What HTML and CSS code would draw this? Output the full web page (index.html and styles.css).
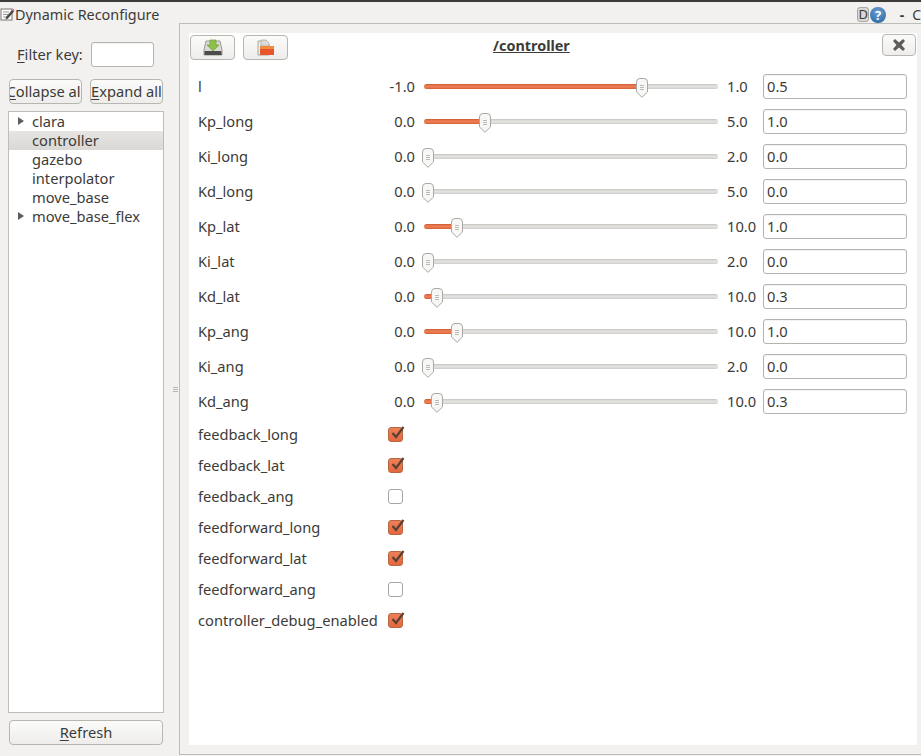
FILE: index.html
```html
<!DOCTYPE html>
<html lang="en">
<head>
<meta charset="utf-8">
<title>Dynamic Reconfigure</title>
<link rel="stylesheet" href="styles.css">
</head>
<body>
<div class="app">
  <header class="titlebar">
    <svg class="app-icon" width="15" height="15" viewBox="0 0 15 15"><rect x="1" y="2" width="11" height="11" fill="#fff" stroke="#77756f"/><path d="M3 5h6M3 7.500h5M3 10h5" stroke="#9a9892"/><path d="M6 10l6-7 2 1.500-6 7-2.500 1z" fill="#4a4945"/><path d="M12 3l1-1.500 1.500 1.500-.5 1.500z" fill="#d26fb0"/></svg>
    <span class="title-text">Dynamic Reconfigure</span>
    <span class="title-tools">
      <span class="d-btn">D</span>
      <span class="help">?</span>
      <span class="dash">-</span>
      <span class="c-btn">C</span>
    </span>
  </header>
  <div class="main">
    <aside class="side">
      <div class="filter">
        <label class="filter-label"><u>F</u>ilter key:</label>
        <span class="field filter-input"></span>
      </div>
      <div class="btn-row">
        <button class="btn"><span><u>C</u>ollapse all</span></button>
        <button class="btn"><span><u>E</u>xpand all</span></button>
      </div>
      <ul class="tree">
        <li class="node"><i class="arrow"></i>clara</li>
        <li class="node selected">controller</li>
        <li class="node">gazebo</li>
        <li class="node">interpolator</li>
        <li class="node">move_base</li>
        <li class="node"><i class="arrow"></i>move_base_flex</li>
      </ul>
      <button class="btn refresh"><span><u>R</u>efresh</span></button>
    </aside>
    <div class="splitter"><i></i><i></i><i></i></div>
    <section class="frame">
      <div class="panel">
        <div class="toolbar">
          <button class="btn tool">
            <svg width="20" height="18" viewBox="0 0 20 18"><path d="M3 2h14l2 9v5H1v-5z" fill="#d9d9d5" stroke="#9b9a96"/><rect x="1.500" y="12" width="17" height="4" fill="#4b4b48"/><path d="M7 1h6v5h3l-6 6-6-6h3z" fill="#8fc14a" stroke="#6f9d34" stroke-width=".7"/></svg>
          </button>
          <button class="btn tool">
            <svg width="18" height="18" viewBox="0 0 18 18"><path d="M1 2h8l3 3v11H1z" fill="#eeeeea" stroke="#a8a7a2"/><path d="M4 1h5l3 3v3H4z" fill="#dcdbd6" stroke="#a8a7a2" stroke-width=".7"/><rect x="3" y="7" width="14" height="9" fill="#e8552a"/><rect x="3" y="7" width="14" height="3" fill="#f08a3c"/></svg>
          </button>
          <h1 class="heading">/controller</h1>
          <button class="btn close">
            <svg width="14" height="14" viewBox="0 0 14 14"><path d="M1 3l2-2 4 3.500L11 1l2 2-3.500 4L13 11l-2 2-4-3.500L3 13l-2-2 3.500-4z" fill="#5d5c58"/></svg>
          </button>
        </div>
        <div class="params">
          <div class="row"><span class="name">l</span><span class="min">-1.0</span><span class="slider" style="--p:.75"><b class="thumb"></b></span><span class="max">1.0</span><span class="field val">0.5</span></div>
          <div class="row"><span class="name">Kp_long</span><span class="min">0.0</span><span class="slider" style="--p:.2"><b class="thumb"></b></span><span class="max">5.0</span><span class="field val">1.0</span></div>
          <div class="row"><span class="name">Ki_long</span><span class="min">0.0</span><span class="slider" style="--p:0"><b class="thumb"></b></span><span class="max">2.0</span><span class="field val">0.0</span></div>
          <div class="row"><span class="name">Kd_long</span><span class="min">0.0</span><span class="slider" style="--p:0"><b class="thumb"></b></span><span class="max">5.0</span><span class="field val">0.0</span></div>
          <div class="row"><span class="name">Kp_lat</span><span class="min">0.0</span><span class="slider" style="--p:.1"><b class="thumb"></b></span><span class="max">10.0</span><span class="field val">1.0</span></div>
          <div class="row"><span class="name">Ki_lat</span><span class="min">0.0</span><span class="slider" style="--p:0"><b class="thumb"></b></span><span class="max">2.0</span><span class="field val">0.0</span></div>
          <div class="row"><span class="name">Kd_lat</span><span class="min">0.0</span><span class="slider" style="--p:.03"><b class="thumb"></b></span><span class="max">10.0</span><span class="field val">0.3</span></div>
          <div class="row"><span class="name">Kp_ang</span><span class="min">0.0</span><span class="slider" style="--p:.1"><b class="thumb"></b></span><span class="max">10.0</span><span class="field val">1.0</span></div>
          <div class="row"><span class="name">Ki_ang</span><span class="min">0.0</span><span class="slider" style="--p:0"><b class="thumb"></b></span><span class="max">2.0</span><span class="field val">0.0</span></div>
          <div class="row"><span class="name">Kd_ang</span><span class="min">0.0</span><span class="slider" style="--p:.03"><b class="thumb"></b></span><span class="max">10.0</span><span class="field val">0.3</span></div>
        </div>
        <div class="checks">
          <div class="check"><span class="name">feedback_long</span><span class="box on"><svg width="17" height="17" viewBox="0 0 17 17"><path d="M3.500 8l3.500 4 7.500-10" fill="none" stroke="#5a4034" stroke-width="2.200"/></svg></span></div>
          <div class="check"><span class="name">feedback_lat</span><span class="box on"><svg width="17" height="17" viewBox="0 0 17 17"><path d="M3.500 8l3.500 4 7.500-10" fill="none" stroke="#5a4034" stroke-width="2.200"/></svg></span></div>
          <div class="check"><span class="name">feedback_ang</span><span class="box"></span></div>
          <div class="check"><span class="name">feedforward_long</span><span class="box on"><svg width="17" height="17" viewBox="0 0 17 17"><path d="M3.500 8l3.500 4 7.500-10" fill="none" stroke="#5a4034" stroke-width="2.200"/></svg></span></div>
          <div class="check"><span class="name">feedforward_lat</span><span class="box on"><svg width="17" height="17" viewBox="0 0 17 17"><path d="M3.500 8l3.500 4 7.500-10" fill="none" stroke="#5a4034" stroke-width="2.200"/></svg></span></div>
          <div class="check"><span class="name">feedforward_ang</span><span class="box"></span></div>
          <div class="check"><span class="name">controller_debug_enabled</span><span class="box on"><svg width="17" height="17" viewBox="0 0 17 17"><path d="M3.500 8l3.500 4 7.500-10" fill="none" stroke="#5a4034" stroke-width="2.200"/></svg></span></div>
        </div>
      </div>
    </section>
  </div>
</div>
</body>
</html>
```

FILE: styles.css
```css
* { box-sizing: border-box; }
html, body { margin: 0; height: 100%; }
body {
  background: #f2f1f0;
  color: #3c3b37;
  font: 14.67px/19px "Noto Sans", sans-serif;
  overflow: hidden;
}
.app {
  width: 921px;
  height: 756px;
  display: flex;
  flex-direction: column;
  border-top: 2px solid #3c3b37;
  overflow: hidden;
}
.titlebar {
  height: 21px;
  padding-top: 4px;
  display: flex;
  align-items: center;
  flex: none;
  position: relative;
}
.app-icon { flex: none; }
.title-text { font-size: 14.4px; }
.title-tools {
  margin-left: auto;
  display: flex;
  align-items: center;
  width: 64px;
  white-space: nowrap;
  font-size: 14px;
}
.d-btn {
  width: 13px;
  height: 15px;
  background: #d8d7d3;
  border: 1px solid #a9a8a3;
  border-radius: 3px;
  font-size: 13px;
  line-height: 13px;
  text-align: center;
}
.help {
  width: 16px;
  height: 16px;
  margin-left: 1px;
  border-radius: 50%;
  background: radial-gradient(circle at 50% 30%, #6a9fd0, #25649f);
  color: #fff;
  font-size: 13px;
  font-weight: 700;
  line-height: 16px;
  text-align: center;
}
.dash { margin-left: 14px; font-weight: 700; }
.c-btn { margin-left: 8px; }
.main { flex: 1; display: flex; min-height: 0; }
.side {
  width: 172px;
  flex: none;
  padding: 0 8px 11px 8px;
  display: flex;
  flex-direction: column;
}
.filter {
  height: 25px;
  margin-top: 19px;
  display: flex;
  align-items: center;
  padding-left: 9px;
}
.filter-label { width: 74px; }
.field {
  background: #fff;
  border: 1px solid #b5b3ae;
  border-radius: 3px;
  box-shadow: inset 0 1px 1px rgba(0,0,0,.05);
}
.filter-input { width: 63px; height: 25px; }
.btn-row {
  display: flex;
  gap: 8px;
  margin: 12px 0 7px 1px;
}
.btn {
  height: 25px;
  padding: 0;
  font: inherit;
  color: inherit;
  background: linear-gradient(#fbfbfa, #eeedeb);
  border: 1px solid #b8b6b1;
  border-radius: 4px;
  display: flex;
  align-items: center;
  justify-content: center;
  overflow: hidden;
  white-space: nowrap;
}
.btn-row .btn { width: 73px; }
.tree {
  list-style: none;
  flex: 1;
  margin: 0;
  padding: 0;
  width: 156px;
  background: #fff;
  border: 1px solid #bfbdb8;
}
.node {
  height: 19px;
  padding-left: 23px;
  line-height: 18px;
  position: relative;
}
.selected { background: linear-gradient(#e6e5e3, #d9d8d5); }
.arrow {
  position: absolute;
  left: 9px;
  top: 5px;
  border-left: 6px solid #5f5e5a;
  border-top: 4px solid transparent;
  border-bottom: 4px solid transparent;
}
.refresh { width: 154px; margin: 7px 0 0 1px; flex: none; }
.splitter {
  width: 7px;
  flex: none;
  display: flex;
  flex-direction: column;
  align-items: center;
  justify-content: center;
  gap: 1px;
}
.splitter i { width: 5px; height: 1px; background: #b9b7b2; }
.frame {
  flex: 1;
  margin-bottom: 1px;
  border: 1px solid #bfbdb8;
  border-right: 0;
  padding: 9px 4px 9px 9px;
  display: flex;
}
.panel {
  flex: 1;
  background: #fff;
  display: flex;
  flex-direction: column;
}
.toolbar {
  height: 27px;
  display: flex;
  align-items: flex-start;
  padding: 2px 1px 0 1px;
  position: relative;
  flex: none;
}
.tool { width: 45px; height: 25px; margin-right: 8px; }
.heading {
  flex: 1;
  margin: 0;
  padding: 1px 0 0 197px;
  font-size: 14.4px;
  line-height: 20px;
  font-weight: 700;
  text-decoration: underline;
  white-space: nowrap;
}
.close { width: 34px; height: 22px; margin-top: -1px; flex: none; }
.params {
  display: flex;
  flex-direction: column;
  gap: 10px;
  padding-top: 14px;
}
.row {
  height: 25px;
  display: grid;
  grid-template-columns: 190px 36px 303px 45px 144px;
  align-items: center;
}
.name { padding-left: 9px; white-space: nowrap; }
.min { text-align: right; }
.slider {
  height: 5px;
  margin-left: 9px;
  position: relative;
  width: 294px;
  border-radius: 3px;
  background:
    linear-gradient(rgba(0,0,0,.12), rgba(255,255,255,.14) 40%, rgba(255,255,255,.14) 60%, rgba(0,0,0,.08)),
    linear-gradient(90deg, #e9683a 0, #e9683a calc(4px + var(--p) * 285px), #dedddA calc(4px + var(--p) * 285px));
}
.thumb {
  position: absolute;
  left: calc(4px + var(--p) * 285px - 6px);
  top: -6px;
  width: 12px;
  height: 20px;
  background: url("data:image/svg+xml,%3Csvg xmlns='http://www.w3.org/2000/svg' width='12' height='20'%3E%3Cpath d='M.5 4a3.500 3.500 0 0 1 3.500-3.500h4a3.500 3.500 0 0 1 3.500 3.500v10L6 19.300.5 14z' fill='%23f7f7f5' stroke='%23aaa8a3'/%3E%3Cpath d='M4 7.500h4M4 9.500h4M4 11.500h4' stroke='%23bcbab5'/%3E%3C/svg%3E") no-repeat;
}
.max { padding-left: 9px; white-space: nowrap; }
.val {
  height: 25px;
  padding-left: 3px;
  line-height: 23px;
  width: 144px;
  display: block;
}
.checks {
  display: flex;
  flex-direction: column;
  padding-top: 5px;
}
.check {
  height: 31px;
  display: flex;
  align-items: center;
}
.check .name { width: 199px; }
.box {
  width: 15px;
  height: 15px;
  border: 1px solid #a8a6a1;
  border-radius: 3px;
  background: #fff;
  position: relative;
}
.box.on { background: linear-gradient(#ec8058, #e4683e); border-color: #b9663f; }
.box svg { position: absolute; left: 0; top: -3px; }
u { text-underline-offset: 2px; }
```
